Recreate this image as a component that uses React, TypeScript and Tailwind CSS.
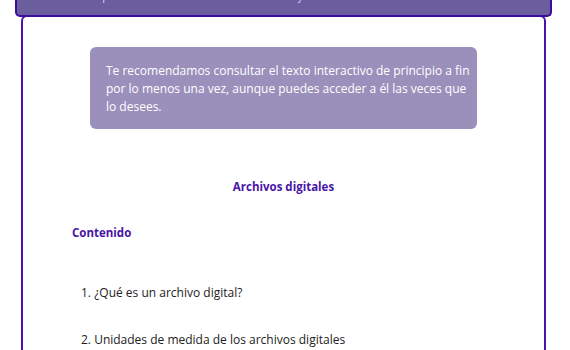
import React from "react";

export default function App() {
  return (
    <div
      className="w-[570px] h-[350px] overflow-hidden bg-white relative"
      style={{ fontFamily: '"Open Sans", "Noto Sans", sans-serif' }}
    >
      <div className="relative z-10 ml-[15px] w-[537px] h-[17px] bg-[#6b5e9e] border-2 border-t-0 border-[#3e0c9c] rounded-b-[5px] overflow-hidden">
        <div className="flex gap-[30px] pl-[12px] -mt-[10px] text-[11px] leading-[11px] text-[#d9d4ea]">
          <span>Inicio</span>
          <span>Mapa</span>
          <span>Glosario</span>
          <span>Créditos</span>
          <span>Ayuda</span>
        </div>
      </div>
      <div className="-mt-[2px] ml-[21px] w-[525px] h-[360px] border-2 border-[#4b13ab] rounded-t-[6px]">
        <div className="ml-[67px] mt-[30px] w-[387px] h-[82px] bg-[#9a90bb] rounded-[6px] pl-[16px] pr-[2px] pt-[15px] text-[12px] leading-[18px] text-white">
          Te recomendamos consultar el texto interactivo de principio a fin por lo menos una vez, aunque puedes acceder a él las veces que lo desees.
        </div>
        <h1 className="mt-[49px] text-center text-[11.5px] leading-[18px] font-bold text-[#4a14a8]">
          Archivos digitales
        </h1>
        <h2 className="mt-[28px] ml-[49px] text-[11.5px] leading-[18px] font-bold text-[#4a14a8]">
          Contenido
        </h2>
        <ol className="mt-[42px] ml-[58px] text-[12px] leading-[18px] text-[#222]">
          <li>1. ¿Qué es un archivo digital?</li>
          <li className="mt-[29px]">2. Unidades de medida de los archivos digitales</li>
        </ol>
      </div>
    </div>
  );
}
